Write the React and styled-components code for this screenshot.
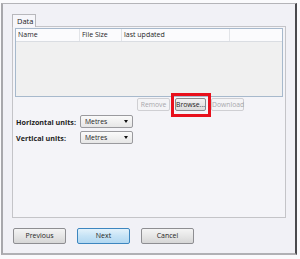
import React from "react";
import styled, { createGlobalStyle } from "styled-components";

const Global = createGlobalStyle`
  html, body { margin: 0; padding: 0; background: #fafafc; }
  body { font-family: "Open Sans", "Noto Sans", sans-serif; font-size: 8px; color: #1e1e1e; }
`;

const Window = styled.div`
  box-sizing: border-box;
  margin: 3px 0 0 1px;
  width: 296px;
  height: 252px;
  background: #f1f1f6;
  border-top: 1px solid #b4b4b8;
  border-left: 2px solid #a8a8ac;
  border-right: 2px solid #4a4a4e;
  border-bottom: 2px solid #b0b0b4;
  padding: 10px 0 0 9px;
  display: flex;
  flex-direction: column;
`;

const TabStrip = styled.div`
  display: flex;
  height: 12px;
`;

const Tab = styled.div`
  box-sizing: border-box;
  width: 24px;
  height: 13px;
  border: 1px solid #b8b8bc;
  border-bottom: none;
  background: #f6f6fa;
  padding: 0 0 0 4px;
  line-height: 12px;
  font-size: 7.5px;
  position: relative;
  z-index: 1;
`;

const Panel = styled.div`
  box-sizing: border-box;
  width: 274px;
  height: 192px;
  border: 1px solid #c4c4c8;
  background: #f4f4f8;
  padding: 1px 2px 0 2px;
  display: flex;
  flex-direction: column;
`;

const List = styled.div`
  box-sizing: border-box;
  height: 69px;
  border: 1px solid #a7b9cc;
  background: #f0f0f0;
  display: flex;
  flex-direction: column;
`;

const Header = styled.div`
  display: grid;
  grid-template-columns: 64px 42px 108px 1fr;
  height: 12px;
  background: #fbfbfd;
  border-bottom: 1px solid #dadde2;
`;

const HeaderCell = styled.div`
  box-sizing: border-box;
  padding-left: 2px;
  line-height: 12px;
  font-size: 7px;
  border-right: 1px solid #e2e4e8;
  white-space: nowrap;
  overflow: hidden;
  &:last-child { border-right: none; }
`;

const ButtonRow = styled.div`
  display: flex;
  gap: 5px;
  margin: 1px 0 0 122px;
  align-items: center;
`;

const SmallButton = styled.div`
  box-sizing: border-box;
  width: ${(p) => p.$w}px;
  height: 13px;
  border: 1px solid ${(p) => (p.$disabled ? "#cfcfd3" : "#8a8a8e")};
  border-radius: 2px;
  background: ${(p) =>
    p.$disabled ? "#f4f4f6" : "linear-gradient(#f2f2f2, #dcdcdc)"};
  color: ${(p) => (p.$disabled ? "#a8a8ac" : "#1e1e1e")};
  font-size: 6.8px;
  line-height: 11px;
  text-align: center;
  white-space: nowrap;
`;

const Highlight = styled.div`
  position: relative;
`;

const RedFrame = styled.div`
  position: absolute;
  left: -4px;
  top: -5px;
  width: 40px;
  height: 24px;
  box-sizing: border-box;
  border: 3px solid #e8101c;
`;

const Form = styled.div`
  display: flex;
  flex-direction: column;
  gap: 3px;
  margin: 4px 0 0 1px;
`;

const FormRow = styled.div`
  display: flex;
  align-items: center;
`;

const Label = styled.div`
  width: 64px;
  font-weight: 700;
  font-size: 7.2px;
  white-space: nowrap;
`;

const Select = styled.div`
  box-sizing: border-box;
  width: 53px;
  height: 13px;
  border: 1px solid #9a9a9e;
  border-radius: 2px;
  background: linear-gradient(#fafafa, #e6e6e6);
  display: flex;
  align-items: center;
  justify-content: space-between;
  padding: 0 4px 0 4px;
  font-size: 6.8px;
`;

const Arrow = styled.span`
  width: 0;
  height: 0;
  border-left: 2px solid transparent;
  border-right: 2px solid transparent;
  border-top: 3px solid #111;
`;

const Footer = styled.div`
  display: flex;
  gap: 11px;
  margin: 10px 0 0 1px;
`;

const BigButton = styled.div`
  box-sizing: border-box;
  width: 53px;
  height: 16px;
  border: 1px solid ${(p) => (p.$primary ? "#3d86bf" : "#8e8e92")};
  border-radius: 2px;
  background: ${(p) =>
    p.$primary
      ? "linear-gradient(#e3f2fb, #c6e3f6 50%, #b2d8f1)"
      : "linear-gradient(#f4f4f4, #e6e6e6 50%, #d6d6d6)"};
  font-size: 7px;
  line-height: 14px;
  text-align: center;
`;

export default function App() {
  return (
    <>
      <Global />
      <Window>
        <TabStrip>
          <Tab>Data</Tab>
        </TabStrip>
        <Panel>
          <List>
            <Header>
              <HeaderCell>Name</HeaderCell>
              <HeaderCell>File Size</HeaderCell>
              <HeaderCell>last updated</HeaderCell>
              <HeaderCell />
            </Header>
          </List>
          <ButtonRow>
            <SmallButton $w={33} $disabled>Remove</SmallButton>
            <Highlight>
              <SmallButton $w={31}>Browse...</SmallButton>
              <RedFrame />
            </Highlight>
            <SmallButton $w={33} $disabled>Download</SmallButton>
          </ButtonRow>
          <Form>
            <FormRow>
              <Label>Horizontal units:</Label>
              <Select>Metres<Arrow /></Select>
            </FormRow>
            <FormRow>
              <Label>Vertical units:</Label>
              <Select>Metres<Arrow /></Select>
            </FormRow>
          </Form>
        </Panel>
        <Footer>
          <BigButton>Previous</BigButton>
          <BigButton $primary>Next</BigButton>
          <BigButton>Cancel</BigButton>
        </Footer>
      </Window>
    </>
  );
}
